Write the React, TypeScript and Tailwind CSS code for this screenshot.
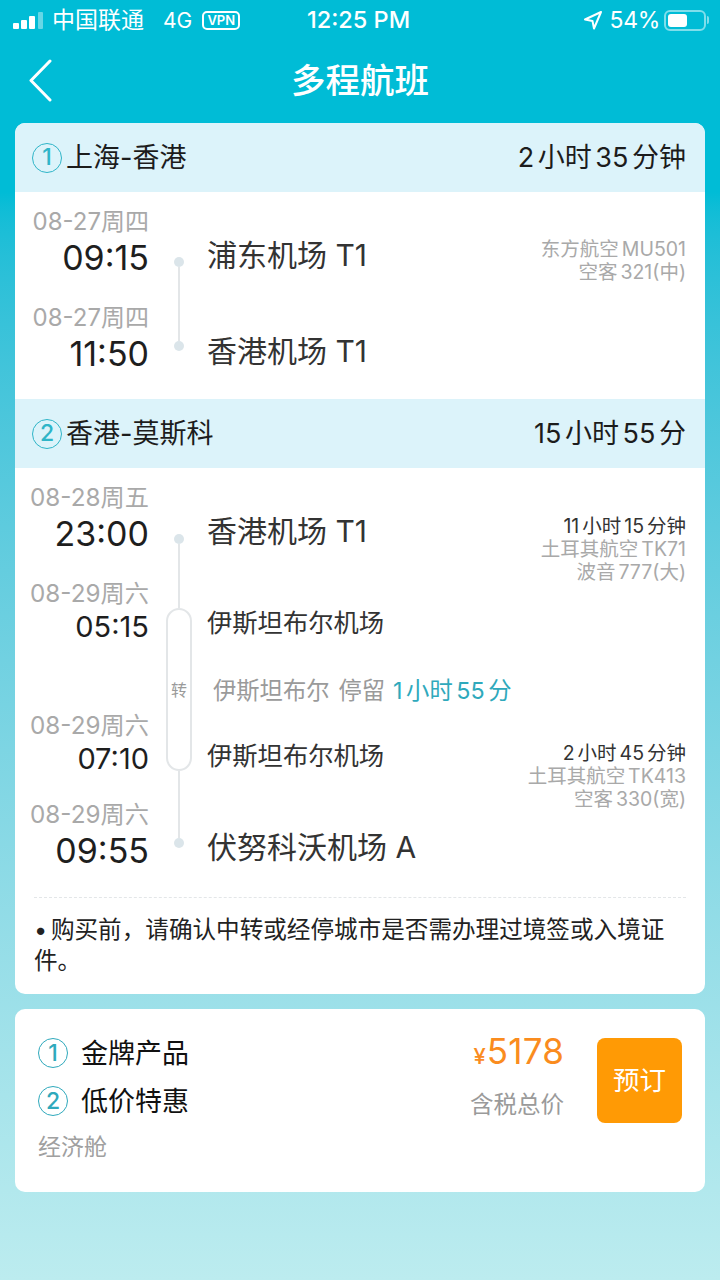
import React from "react";

const font = { fontFamily: '"Inter", "Noto Sans CJK SC", sans-serif' };

function Dot() {
  return <div className="w-[10px] h-[10px] rounded-full bg-[#dbe5ea] shrink-0" />;
}
function VLine({ h }: { h?: number }) {
  return <div className="w-[2px] bg-[#e3e6e8] grow shrink-0" style={h ? { height: h, flexGrow: 0 } : undefined} />;
}

function LegHeader({ n, route, dur, top }: { n: string; route: string; dur: string; top?: boolean }) {
  return (
    <div className={`h-[69px] bg-[#dcf3fa] flex items-center justify-between pl-[17px] pr-[19px] ${top ? "rounded-t-[10px]" : ""}`}>
      <div className="flex items-center gap-[4px]">
        <div className="w-[30px] h-[30px] rounded-full border border-[#2fb5c8] text-[#2fb5c8] flex items-center justify-center text-[23px] font-medium leading-none">{n}</div>
        <span className="text-[27px] leading-none text-[#1c1c1c]">{route}</span>
      </div>
      <span className="text-[27px] leading-none text-[#1c1c1c] [word-spacing:-4px]">{dur}</span>
    </div>
  );
}

function Time({ date, time, big, h, wide }: { date: string; time: string; big?: boolean; h: number; wide?: boolean }) {
  return (
    <div className="flex flex-col items-end" style={{ height: h }}>
      <div className={`leading-[28px] text-[#a9a9a9] whitespace-nowrap ${wide ? "text-[24.25px]" : "text-[24px]"}`}>{date}</div>
      <div className={`whitespace-nowrap text-[#1e1e1e] ${big ? "text-[34px] leading-[44px]" : "text-[29px] leading-[38px]"}`}>{time}</div>
    </div>
  );
}

function Info({ lines }: { lines: { t: string; dark?: boolean }[] }) {
  return (
    <div className="flex flex-col items-end">
      {lines.map((l, i) => (
        <div key={i} className={`text-[19.5px] leading-[23px] whitespace-nowrap [word-spacing:-2.5px] ${l.dark ? "text-[#333333]" : "text-[#a9a9a9]"}`}>{l.t}</div>
      ))}
    </div>
  );
}

export default function App() {
  return (
    <div className="w-[720px] h-[1280px] overflow-hidden flex flex-col bg-gradient-to-b from-[#00bcd6] from-[15%] to-[#bcecef]" style={font}>
      {/* status bar */}
      <div className="h-[40px] flex items-center pl-[12px] pr-[11px] text-white shrink-0">
        <div className="flex-1 flex items-center">
          <svg width="32" height="20" viewBox="0 0 32 20" className="mr-[8px]">
            <rect x="1" y="13" width="6" height="6" rx="1" fill="#fff" />
            <rect x="9" y="10" width="6" height="9" rx="1" fill="#fff" />
            <rect x="17" y="6" width="6" height="13" rx="1" fill="#fff" />
            <rect x="26" y="2" width="5" height="17" rx="1" fill="#fff" fillOpacity="0.4" />
          </svg>
          <span className="text-[23px] leading-none">中国联通</span>
          <span className="text-[21px] leading-none ml-[19px]">4G</span>
          <span className="ml-[10px] w-[38px] h-[19px] border-2 border-white rounded-[5px] text-[13px] leading-none font-semibold flex items-center justify-center">VPN</span>
        </div>
        <div className="text-[23.5px] leading-none font-medium -ml-[4px]">12:25 PM</div>
        <div className="flex-1 flex items-center justify-end">
          <svg width="20" height="20" viewBox="0 0 20 20" className="mr-[6px]" fill="none" stroke="#fff" strokeWidth="2" strokeLinejoin="round">
            <path d="M18 2 2 9.5l7.5 1.5 1.5 7.5z" />
          </svg>
          <span className="text-[23px] leading-none tracking-[-0.3px]">54%</span>
          <div className="ml-[4px] w-[42px] h-[21px] border-2 border-white/50 rounded-[6px] p-[2px] flex">
            <div className="w-[19px] bg-white rounded-[3px]" />
          </div>
          <div className="w-[2px] h-[8px] bg-white/50 ml-[1px] rounded-r" />
        </div>
      </div>

      {/* nav */}
      <div className="h-[83px] flex items-center shrink-0 pl-[29px]">
        <div className="flex-1">
          <svg width="24" height="44" viewBox="0 0 24 44" fill="none" stroke="#fff" strokeWidth="3" strokeLinecap="round" strokeLinejoin="round" className="-mt-[2px]">
            <path d="M21 2 2 21.5 21 41" />
          </svg>
        </div>
        <div className="text-[34.5px] leading-none text-white font-medium -mt-[1px]">多程航班</div>
        <div className="flex-1 pr-[29px]" />
      </div>

      {/* main card */}
      <div className="mx-[15px] h-[871px] bg-white rounded-[10px] shrink-0 flex flex-col">
        <LegHeader top n="1" route="上海-香港" dur="2 小时 35 分钟" />

        {/* leg 1 */}
        <div className="h-[207px] flex pt-[16px] pr-[19px]">
          <div className="w-[134px] shrink-0 flex flex-col">
            <Time big date="08-27周四" time="09:15" h={96} />
            <Time big date="08-27周四" time="11:50" h={80} />
          </div>
          <div className="w-[60px] shrink-0 flex flex-col items-center pt-[49px] pb-[48px]">
            <Dot />
            <VLine />
            <Dot />
          </div>
          <div className="w-[198px] -ml-[2px] shrink-0 flex flex-col pt-[28px] text-[30px] leading-[38px] text-[#333333]">
            <div className="h-[96px] whitespace-nowrap">浦东机场 T1</div>
            <div className="whitespace-nowrap">香港机场 T1</div>
          </div>
          <div className="grow pt-[30px]">
            <Info lines={[{ t: "东方航空 MU501" }, { t: "空客 321(中)" }]} />
          </div>
        </div>

        <LegHeader n="2" route="香港-莫斯科" dur="15 小时 55 分" />

        {/* leg 2 */}
        <div className="flex pt-[16px] pr-[19px] h-[429px]">
          <div className="w-[134px] shrink-0 flex flex-col">
            <Time wide big date="08-28周五" time="23:00" h={96} />
            <Time wide date="08-29周六" time="05:15" h={132} />
            <Time wide date="08-29周六" time="07:10" h={89} />
            <Time wide big date="08-29周六" time="09:55" h={80} />
          </div>
          <div className="w-[60px] shrink-0 flex flex-col items-center pt-[50px]">
            <Dot />
            <VLine h={64} />
            <div className="w-[26px] h-[163px] shrink-0 rounded-[13px] border-2 border-[#e3e6e8] flex items-center justify-center text-[16px] leading-none text-[#9a9a9a]">转</div>
            <VLine h={67} />
            <Dot />
          </div>
          <div className="grow -ml-[2px] flex flex-col text-[#333333]">
            <div className="h-[91px] flex justify-between pt-[28px]">
              <div className="text-[30px] leading-[38px] whitespace-nowrap">香港机场 T1</div>
              <div className="pt-[3px]">
                <Info lines={[{ t: "11 小时 15 分钟", dark: true }, { t: "土耳其航空 TK71" }, { t: "波音 777(大)" }]} />
              </div>
            </div>
            <div className="h-[66px] pt-[28px] text-[25.3px] leading-[40px] whitespace-nowrap">伊斯坦布尔机场</div>
            <div className="h-[94px] pt-[5px] pl-[6px] flex items-center text-[23.3px] leading-none whitespace-nowrap text-[#9a9a9a]">
              <span>伊斯坦布尔</span>
              <span className="ml-[9px]">停留</span>
              <span className="ml-[8px] text-[#2fa9bc] [word-spacing:-3px]">1 小时 55 分</span>
            </div>
            <div className="h-[94px] flex justify-between pt-[1px]">
              <div className="text-[25.3px] leading-[40px] whitespace-nowrap">伊斯坦布尔机场</div>
              <div className="pt-[6px]">
                <Info lines={[{ t: "2 小时 45 分钟", dark: true }, { t: "土耳其航空 TK413" }, { t: "空客 330(宽)" }]} />
              </div>
            </div>
            <div className="text-[30px] leading-[38px] whitespace-nowrap -mt-[1px]">伏努科沃机场 A</div>
          </div>
        </div>

        {/* note */}
        <div className="mx-[19px] border-t border-dashed border-[#e3e6e8] pt-[16px] text-[23.6px] leading-[31px] text-[#222222] [word-spacing:-3px]">
          • 购买前，请确认中转或经停城市是否需办理过境签或入境证件。
        </div>
      </div>

      {/* bottom card */}
      <div className="mx-[15px] mt-[15px] h-[183px] bg-white rounded-[10px] shrink-0 flex pl-[23px] pr-[23px] pt-[29px]">
        <div className="grow flex flex-col">
          <div className="flex items-center h-[30px]">
            <div className="w-[30px] h-[30px] rounded-full border border-[#2fa9bc] text-[#2fa9bc] flex items-center justify-center text-[23px] font-medium leading-none">1</div>
            <span className="ml-[13px] text-[27px] leading-none text-[#111111]">金牌产品</span>
          </div>
          <div className="flex items-center h-[30px] mt-[18px]">
            <div className="w-[30px] h-[30px] rounded-full border border-[#2fa9bc] text-[#2fa9bc] flex items-center justify-center text-[23px] font-medium leading-none">2</div>
            <span className="ml-[13px] text-[27px] leading-none text-[#111111]">低价特惠</span>
          </div>
          <div className="mt-[16px] text-[23px] leading-[30px] text-[#a0a0a0]">经济舱</div>
        </div>
        <div className="flex flex-col items-end shrink-0 mr-[33px] -mt-[7px]">
          <div className="flex items-baseline text-[#fa8c1e] leading-[40px]">
            <span className="text-[22px] font-medium mr-[1px]">¥</span>
            <span className="text-[35px] tracking-[0.2px]">5178</span>
          </div>
          <div className="mt-[14px] text-[23.5px] leading-[30px] text-[#9a9a9a]">含税总价</div>
        </div>
        <div className="w-[85px] h-[85px] bg-[#ff9a05] rounded-[8px] flex items-center justify-center text-white text-[26.5px] leading-none shrink-0">预订</div>
      </div>
    </div>
  );
}
